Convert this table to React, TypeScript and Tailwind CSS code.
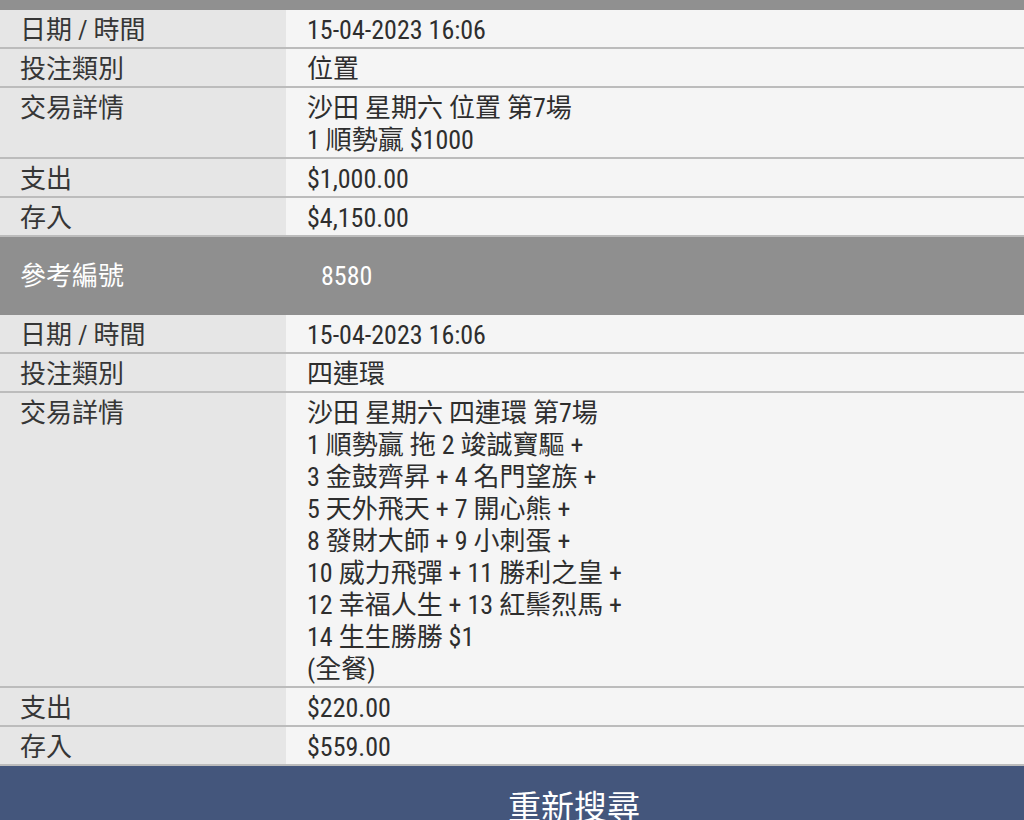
const FONT =
  '"Roboto Condensed", "DejaVu Sans Condensed", "Liberation Sans Narrow", Roboto, "Noto Sans CJK TC", sans-serif';

type Row = { label: string; lines: string[] };

const first: Row[] = [
  { label: "日期 / 時間", lines: ["15-04-2023 16:06"] },
  { label: "投注類別", lines: ["位置"] },
  { label: "交易詳情", lines: ["沙田 星期六 位置 第7場", "1 順勢贏 $1000"] },
  { label: "支出", lines: ["$1,000.00"] },
  { label: "存入", lines: ["$4,150.00"] },
];

const second: Row[] = [
  { label: "日期 / 時間", lines: ["15-04-2023 16:06"] },
  { label: "投注類別", lines: ["四連環"] },
  {
    label: "交易詳情",
    lines: [
      "沙田 星期六 四連環 第7場",
      "1 順勢贏 拖 2 竣誠寶驅 +",
      "3 金鼓齊昇 + 4 名門望族 +",
      "5 天外飛天 + 7 開心熊 +",
      "8 發財大師 + 9 小刺蛋 +",
      "10 威力飛彈 + 11 勝利之皇 +",
      "12 幸福人生 + 13 紅鬃烈馬 +",
      "14 生生勝勝 $1",
      "(全餐)",
    ],
  },
  { label: "支出", lines: ["$220.00"] },
  { label: "存入", lines: ["$559.00"] },
];

function DetailRow({ row }: { row: Row }) {
  return (
    <div className="flex border-b-2 border-[#bcbcbc]">
      <div className="w-[286px] shrink-0 bg-[#e6e6e6] pl-5 pt-[4px] pb-[1px] text-[#363636]">
        {row.label}
      </div>
      <div className="flex-1 bg-[#f5f5f5] pl-[21px] pt-[4px] pb-[1px] text-[#2e2e2e]">
        {row.lines.map((l) => (
          <div key={l}>{l}</div>
        ))}
      </div>
    </div>
  );
}

export default function App() {
  return (
    <div
      className="h-[820px] w-[1024px] overflow-hidden bg-[#f5f5f5] text-[26px] leading-[32px]"
      style={{ fontFamily: FONT }}
    >
      <div className="h-[10px] bg-[#909090]" />
      {first.map((r) => (
        <DetailRow key={r.label} row={r} />
      ))}
      <div className="flex h-[78px] items-center bg-[#8f8f8f] text-white">
        <div className="w-[286px] shrink-0 pl-5">參考編號</div>
        <div className="pl-[35px]">8580</div>
      </div>
      {second.map((r) => (
        <DetailRow key={r.label} row={r} />
      ))}
      <button className="flex h-[60px] w-full justify-center bg-[#44567c] pl-[124px] pt-[26px] text-[33px] text-white">
        重新搜尋
      </button>
    </div>
  );
}
